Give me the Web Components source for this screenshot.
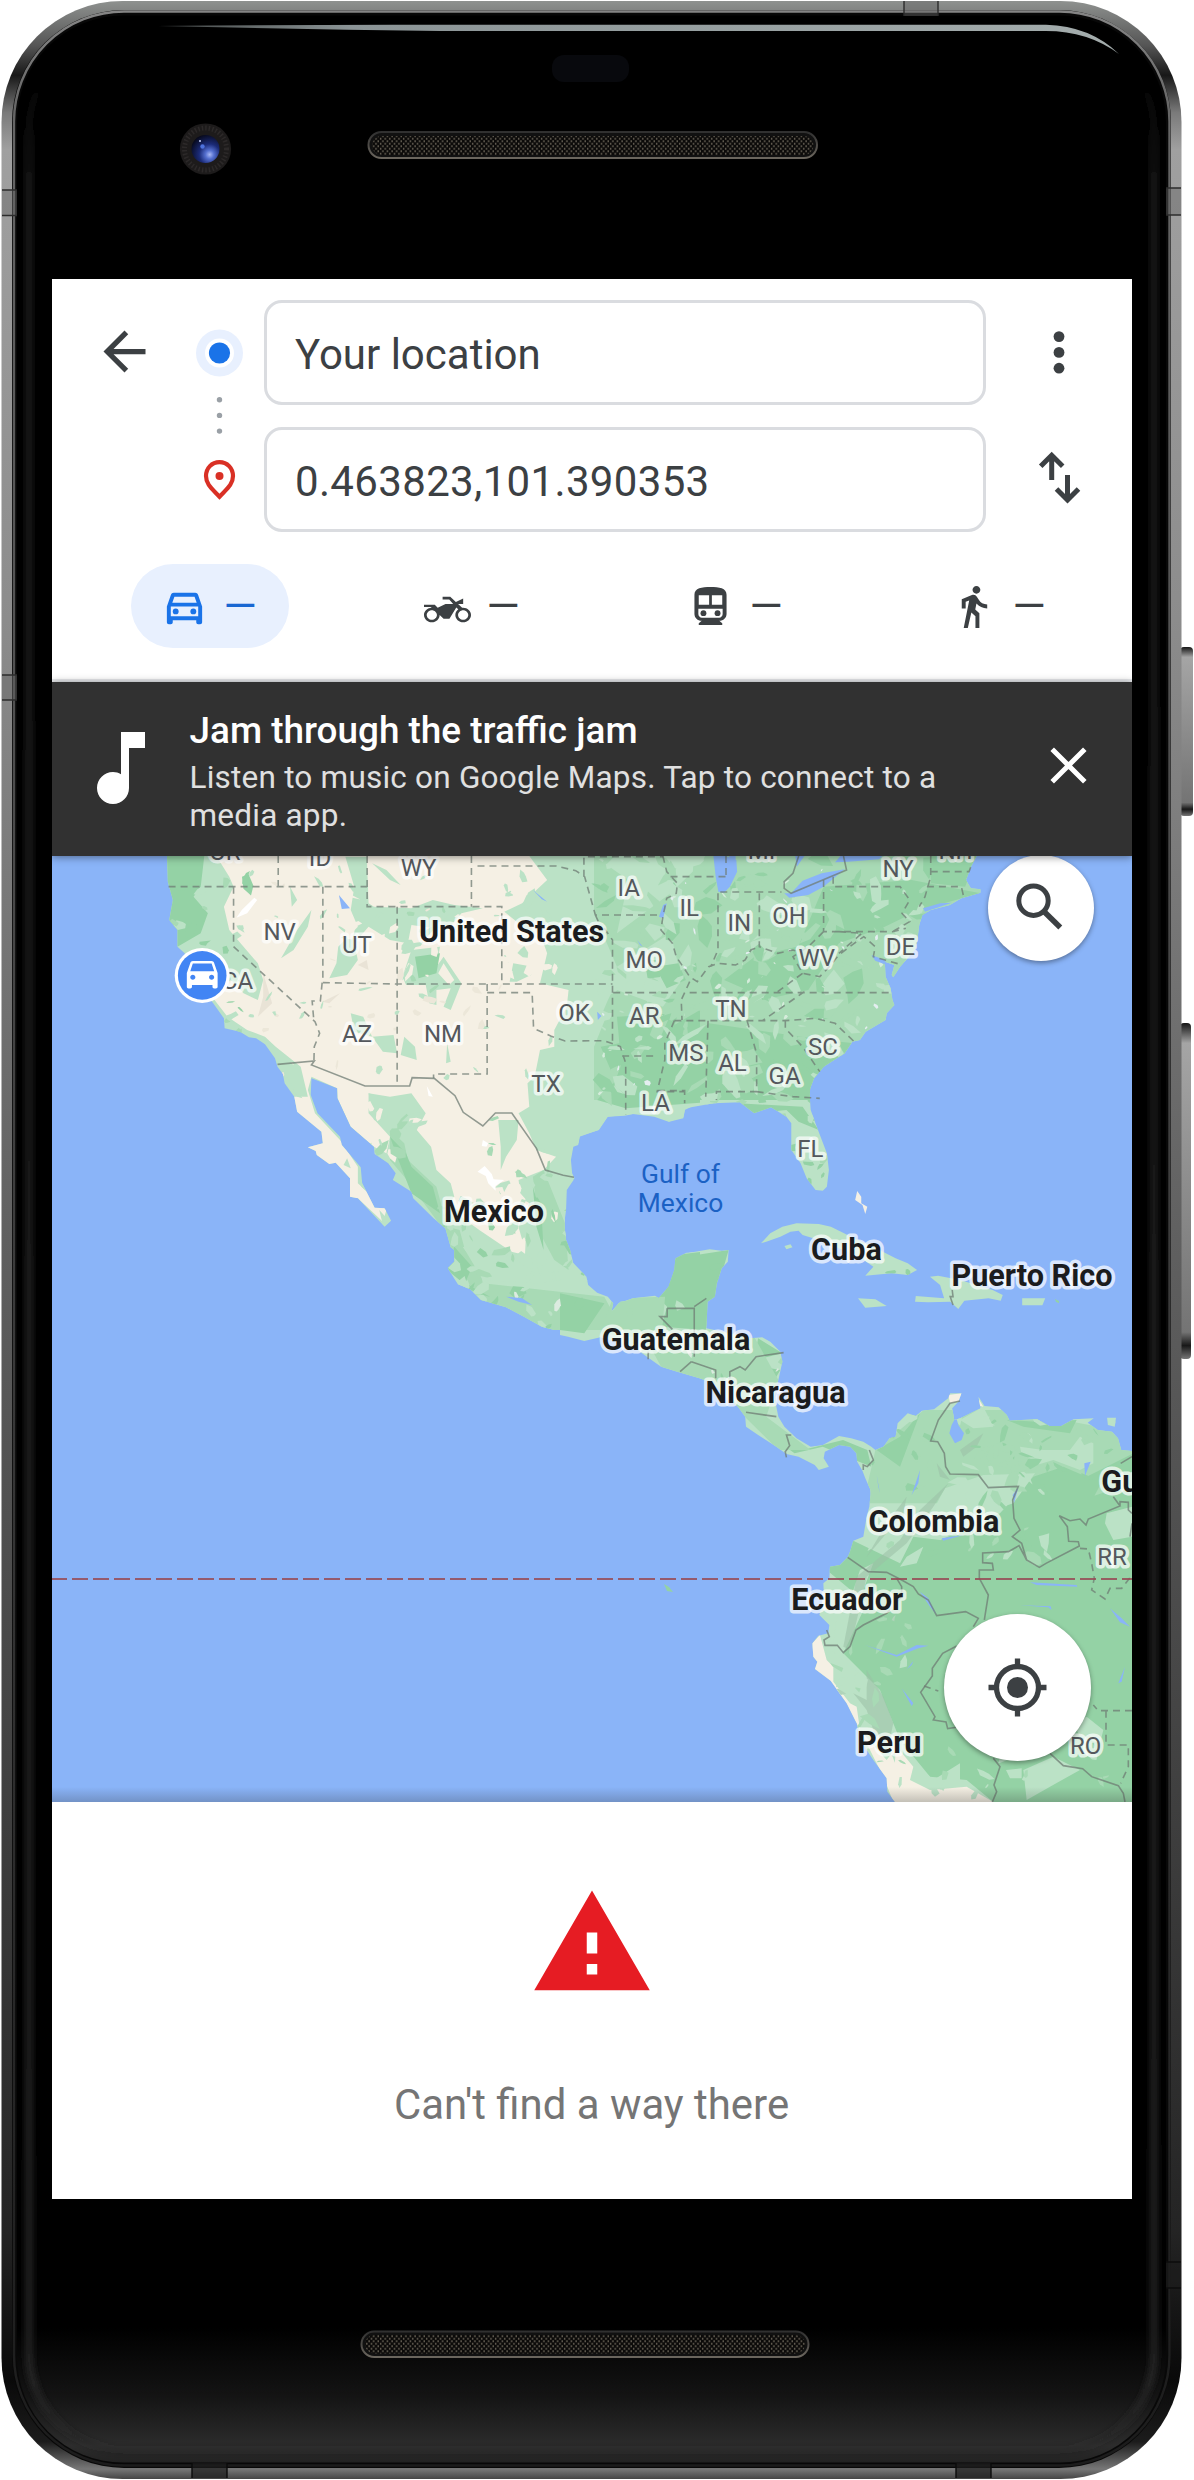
<!DOCTYPE html>
<html lang="en">
<head>
<meta charset="utf-8">
<title>Directions</title>
<style>
html,body{margin:0;background:#fff}
body{width:1194px;height:2480px;overflow:hidden;font-family:Roboto,"Liberation Sans",sans-serif}
</style>
</head>
<body>
<phone-frame>
  <directions-header>
    <route-field slot="from">Your location</route-field>
    <route-field slot="to" numeric>0.463823,101.390353</route-field>
    <travel-mode slot="modes" icon="car" selected>—</travel-mode>
    <travel-mode slot="modes" icon="moto">—</travel-mode>
    <travel-mode slot="modes" icon="transit">—</travel-mode>
    <travel-mode slot="modes" icon="walk">—</travel-mode>
  </directions-header>
  <media-banner>
    <span slot="title">Jam through the traffic jam</span>
    <span slot="text">Listen to music on Google Maps. Tap to connect to a media app.</span>
  </media-banner>
  <route-map></route-map>
  <route-error>Can't find a way there</route-error>
</phone-frame>
<script>
function define(name, html, setup) {
  const t = document.createElement('template');
  t.innerHTML = html;
  customElements.define(name, class extends HTMLElement {
    constructor() {
      super();
      this.attachShadow({ mode: 'open' }).appendChild(t.content.cloneNode(true));
    }
    connectedCallback() { if (setup) setup(this, this.shadowRoot); }
  });
}

define('phone-frame', `
<style>
:host{display:block;position:relative;width:1194px;height:2480px}
.shell{position:absolute;inset:0;display:block}
.pad{box-sizing:border-box;padding:279px 62px 281px 52px;height:2480px;position:relative}
.screen{display:flex;flex-direction:column;width:1080px;height:1920px;background:#fff;overflow:hidden}
</style>
<svg class="shell" width="1194" height="2480" viewBox="0 0 1194 2480">
<defs>
<linearGradient id="rim" x1="0" y1="0" x2="0" y2="1"><stop offset="0" stop-color="#8e918f"/><stop offset=".018" stop-color="#555"/><stop offset=".03" stop-color="#181818"/><stop offset=".045" stop-color="#7a7a7a"/><stop offset=".06" stop-color="#a0a0a0"/><stop offset=".25" stop-color="#8c8c8c"/><stop offset=".5" stop-color="#606060"/><stop offset=".75" stop-color="#3c3c3c"/><stop offset=".9" stop-color="#242424"/><stop offset=".96" stop-color="#090909"/><stop offset=".985" stop-color="#1c1c1c"/><stop offset=".996" stop-color="#777"/><stop offset="1" stop-color="#444"/></linearGradient>
<linearGradient id="rim2" x1="0" y1="0" x2="0" y2="1"><stop offset="0" stop-color="#858585"/><stop offset=".04" stop-color="#666"/><stop offset=".5" stop-color="#3c3c3c"/><stop offset="1" stop-color="#1c1c1c"/></linearGradient>
<linearGradient id="face" x1="0" y1="0" x2="0" y2="1"><stop offset="0" stop-color="#000"/><stop offset=".945" stop-color="#000"/><stop offset=".973" stop-color="#141414"/><stop offset=".993" stop-color="#2c2c2c"/><stop offset="1" stop-color="#222"/></linearGradient>
<linearGradient id="sheen" x1="0" y1="0" x2="0" y2="1"><stop offset="0" stop-color="#1a1a1a" stop-opacity="0"/><stop offset=".02" stop-color="#1a1a1a" stop-opacity=".1"/><stop offset=".06" stop-color="#1a1a1a"/><stop offset=".97" stop-color="#262626"/><stop offset="1" stop-color="#2c2c2c" stop-opacity=".2"/></linearGradient>
<filter id="soft" x="-5%" y="-5%" width="110%" height="110%"><feGaussianBlur stdDeviation="3"/></filter>
<linearGradient id="glint"><stop offset="0" stop-color="#9aa3a3" stop-opacity=".4"/><stop offset=".2" stop-color="#8b9496"/><stop offset="1" stop-color="#a4adad"/></linearGradient>
<linearGradient id="slot" x1="0" y1="0" x2="0" y2="1"><stop offset="0" stop-color="#303030"/><stop offset="1" stop-color="#6b665e"/></linearGradient>
<linearGradient id="key" x1="0" y1="0" x2="0" y2="1"><stop offset="0" stop-color="#151515"/><stop offset=".06" stop-color="#a5a5a5"/><stop offset=".92" stop-color="#747474"/><stop offset=".96" stop-color="#181818"/><stop offset="1" stop-color="#777"/></linearGradient>
<radialGradient id="lens" cx=".65" cy=".7" r=".75"><stop offset="0" stop-color="#a9b8f5"/><stop offset=".2" stop-color="#5570d0"/><stop offset=".5" stop-color="#1b2b78"/><stop offset="1" stop-color="#060818"/></radialGradient>
<pattern id="mesh" width="4.6" height="5" patternUnits="userSpaceOnUse"><rect width="4.6" height="5" fill="#0b0a09"/><path d="M1.1 .2v2M3.4 2.7v2" stroke="#645e53" stroke-width="1.4"/></pattern>
</defs>
<rect x="1180" y="647" width="13" height="169" rx="4" fill="url(#key)"/>
<rect x="1180" y="1023" width="11" height="336" rx="4" fill="url(#key)"/>
<rect x="1.5" y="1" width="1180" height="2478" rx="121" fill="url(#rim)"/>
<rect x="12" y="10" width="1159" height="2458" rx="112" fill="#080808"/>
<rect x="14" y="11.5" width="1155.500" height="2454" rx="110" fill="none" stroke="url(#rim2)" stroke-width="2.400"/>
<rect x="17" y="15.500" width="1149" height="2447" rx="106" fill="url(#face)"/>
<rect x="29" y="34" width="1125" height="2416" rx="96" fill="none" stroke="url(#sheen)" stroke-width="7" filter="url(#soft)"/>
<g fill="#666" fill-opacity=".45">
<path d="M2 190h15v25h-15zM2 675h15v25h-15zM1166 188h15v27h-15zM904 1v15h34v-15z"/>
<path d="M192 2463v15h35v-15zM956 2463v15h35v-15zM1166 2262h15v26h-15z" fill="#1c1c1c" fill-opacity=".7"/></g>
<path d="M2 190h15M2 215.500h15M2 675h15M2 700h15M1166 188h15M1166 215h15M904 1v15M938 1v15" stroke="#2c2c2c" stroke-width="1.400"/>
<path d="M192 2463v15M227 2463v15M956 2463v15M991 2463v15M1166 2262h15M1166 2288h15" stroke="#0c0c0c" stroke-width="1.400"/>
<path d="M158 26Q300 24.500 440 24.800H1046Q1090 26 1119 54Q1088 31 1046 31H440Q300 29 158 26z" fill="url(#glint)"/>
<rect x="552" y="55" width="77" height="27" rx="12" fill="#08090d"/>
<circle cx="205.500" cy="149" r="25.600" fill="#1d1b1b"/><circle cx="205.500" cy="149" r="21" fill="none" stroke="#2c2929" stroke-width="5" stroke-dasharray="1.500 2"/>
<circle cx="205.500" cy="149" r="14" fill="url(#lens)"/><circle cx="202.500" cy="146.500" r="2.200" fill="#4e72dc"/><circle cx="200" cy="141" r="1" fill="#c8d4ff"/>
<rect x="368.500" y="132" width="448.500" height="26" rx="13" fill="#111" stroke="url(#slot)" stroke-width="2"/><rect x="372" y="136" width="441.500" height="19" rx="9.500" fill="url(#mesh)"/>
<rect x="361.500" y="2331.500" width="447" height="25.500" rx="12.700" fill="#111" stroke="url(#slot)" stroke-width="2"/><rect x="365" y="2335" width="440" height="18.500" rx="9" fill="url(#mesh)"/>
</svg>
<div class="pad"><div class="screen"><slot></slot></div></div>`);

define('route-field', `
<style>
:host{display:flex;align-items:center;box-sizing:border-box;height:105px;border:3px solid #dadce0;border-radius:18px;padding:4px 0 0 28px;font-size:42px;color:#3c4043;white-space:nowrap}
:host([numeric]){letter-spacing:.34px}
</style><slot></slot>`);

const MODES = {
  car: '<path d="M18.92 6.01C18.72 5.42 18.16 5 17.5 5h-11c-.66 0-1.21.42-1.42 1.01L3 12v8c0 .55.45 1 1 1h1c.55 0 1-.45 1-1v-1h12v1c0 .55.45 1 1 1h1c.55 0 1-.45 1-1v-8l-2.080-5.990zM6.850 7h10.290l1.080 3.110H5.770L6.850 7zM19 17H5v-5h14v5z"/><circle cx="7.500" cy="14.500" r="1.500"/><circle cx="16.500" cy="14.500" r="1.500"/>',
  moto: '<path transform="translate(0 2.300) scale(1 .936)" d="M20 11c-.18 0-.36.03-.53.05L17.410 9H20V6l-3.720 1.860L13.410 5H9.500v1.600h3.390l2 2.400H11l-4 2-1.500-1.600H0v1.200h3.200L4 11c-2.210 0-4 1.790-4 4s1.790 4 4 4 4-1.790 4-4l2 2h3l3.490-6.100 1.010 1.010c-.91.73-1.500 1.840-1.500 3.090 0 2.210 1.790 4 4 4s4-1.790 4-4-1.790-4-4-4zM4 17.600c-1.400 0-2.600-1.200-2.600-2.600s1.200-2.600 2.600-2.600 2.600 1.200 2.600 2.600-1.200 2.600-2.600 2.600zm16 0c-1.400 0-2.600-1.200-2.600-2.600s1.200-2.600 2.600-2.600 2.600 1.200 2.600 2.600-1.200 2.600-2.600 2.600z"/>',
  transit: '<path fill-rule="evenodd" d="M12 2c-4.420 0-8.200.5-8.200 4v9.800C3.800 17.700 5.400 19.300 7.500 19.300L6 20.600v.9h12v-.9l-1.500-1.300c2.100 0 3.700-1.600 3.700-3.500V6c0-3.500-3.780-4-8.200-4zM6 6.200h5.300v4.900H6zM12.700 6.200H18v4.900h-5.300zM5.800 13.100h12.400v2.700c0 1-.8 1.900-1.800 1.900H7.600c-1 0-1.800-.9-1.800-1.900z"/><circle cx="8.400" cy="15.400" r="1.500"/><circle cx="15.600" cy="15.400" r="1.500"/>',
  walk: '<path d="M13.500 5.500c1.100 0 2-.9 2-2s-.9-2-2-2-2 .9-2 2 .9 2 2 2zM9.800 8.900L7 23h2.100l1.800-8 2.100 2v6h2v-7.500l-2.100-2 .6-3C14.800 12 16.800 13 19 13v-2c-1.900 0-3.500-1-4.300-2.400l-1-1.600c-.4-.6-1-1-1.700-1-.3 0-.5.1-.8.1L6 8.300V13h2V9.600l1.800-.7"/>'
};
define('travel-mode', `
<style>
:host{display:flex;align-items:center;box-sizing:border-box;width:158px;height:84px;padding-left:30px;gap:15.500px;border-radius:42px;color:#3c4043;font-size:42.500px}
:host([selected]){background:#e8f0fe;color:#1967d2}
:host([selected]) svg{fill:#1a73e8}
svg{width:47px;height:47px;fill:#3c4043;flex:none}
span{display:block;line-height:43px;padding-top:1px}
</style><svg viewBox="0 0 24 24"></svg><span><slot></slot></span>`,
(el, root) => { root.querySelector('svg').innerHTML = MODES[el.getAttribute('icon')]; });

define('directions-header', `
<style>
:host{display:block;box-sizing:border-box;height:403px;flex:none;border-bottom:3px solid #e8eaed;background:#fff}
.rows{display:flex;padding-top:21px}
.back{width:126px;height:105px;box-sizing:border-box;padding:20px 0 0 41px;flex:none}
.marks{width:86px;flex:none}
.fields{width:722px;display:flex;flex-direction:column;gap:22px}
.acts{flex:1}
svg{display:block}
.modes{display:flex;gap:105px;padding:32px 0 0 79px}
</style>
<div class="rows">
<div class="back"><svg width="63" height="63" viewBox="0 0 24 24" fill="#3c4043"><path d="M20 11H7.830l5.590-5.590L12 4l-8 8 8 8 1.410-1.410L7.830 13H20v-2z"/></svg></div>
<div class="marks"><svg width="86" height="232" viewBox="178 300 86 232"><circle cx="219.500" cy="353" r="23.500" fill="#e8f0fe"/><circle cx="219.500" cy="353" r="14.500" fill="#fff"/><circle cx="219.500" cy="353" r="10.600" fill="#1a73e8"/><g fill="#9aa0a6"><circle cx="219.500" cy="399.700" r="2.700"/><circle cx="219.500" cy="415.400" r="2.700"/><circle cx="219.500" cy="431.100" r="2.700"/></g><path d="M219.500 462.100c-7.700 0-13.500 6-13.500 14 0 8.500 6.300 12.900 13.500 20.600 7.200-7.700 13.500-12.100 13.500-20.600 0-8-5.800-14-13.500-14z" fill="none" stroke="#d93025" stroke-width="4.200"/><circle cx="219.500" cy="476" r="4" fill="#d93025"/></svg></div>
<div class="fields"><slot name="from"></slot><slot name="to"></slot></div>
<div class="acts"><svg width="146" height="232" viewBox="986 300 146 232"><g fill="#3c4043"><circle cx="1059" cy="336.600" r="5.400"/><circle cx="1059" cy="352.400" r="5.400"/><circle cx="1059" cy="368.200" r="5.400"/></g><g fill="none" stroke="#3c4043" stroke-width="5"><path d="M1051.700 480V456M1040.700 466.300L1051.700 455.300L1062.700 466.300M1067.500 475V499M1056.500 489L1067.500 500L1078.500 489"/></g></svg></div>
</div>
<div class="modes"><slot name="modes"></slot></div>`);

define('media-banner', `
<style>
:host{display:flex;flex:none;height:174px;background:#313131;color:#fff;position:relative;z-index:2;box-shadow:0 1px 8px rgba(0,0,0,.45)}
.note{width:96px;height:96px;margin:38px 0 0 20.500px;flex:none}
.copy{margin:27px 0 0 21px;width:775px}
.t{font-size:36.900px;line-height:43px;font-weight:500}
.b{font-size:31.500px;line-height:38px;color:#e0e0e0;margin-top:7px;letter-spacing:.22px}
.x{width:63px;height:63px;margin:52px 0 0 72.500px;flex:none}
</style>
<svg class="note" viewBox="0 0 24 24" fill="#fff"><path d="M12 3v10.550c-.59-.34-1.270-.55-2-.55-2.210 0-4 1.790-4 4s1.790 4 4 4 4-1.790 4-4V7h4V3h-6z"/></svg>
<div class="copy"><div class="t"><slot name="title"></slot></div><div class="b"><slot name="text"></slot></div></div>
<svg class="x" viewBox="0 0 63 63" stroke="#fff" stroke-width="5"><path d="M15.200 15.200L47.800 47.800M47.800 15.200L15.200 47.800"/></svg>`);

define('map-button', `
<style>
:host{display:flex;align-items:center;justify-content:center;position:absolute;border-radius:50%;background:#fff;box-shadow:0 2px 5px rgba(0,0,0,.38)}
</style><slot></slot>`);

const STATES = [['OR',225,860],['ID',320,865.7],['WY',418.6,876],['NV',279.6,939.5],['UT',357,953],['CA',237.5,989],['AZ',357,1042.3],['NM',443,1042.3],['OK',574,1021],['TX',546,1092],['IA',628.6,896],['MO',644.3,968.3],['AR',644.3,1023.7],['LA',655.4,1111.3],['IL',689.3,916.3],['IN',739.4,931.3],['OH',789,923.7],['WV',816.7,965.7],['NY',898,877],['NH',955.6,859],['MI',761.6,859],['DE',900.5,955],['TN',731,1017],['MS',685.8,1060.7],['AL',732.5,1070.7],['SC',823,1054.7],['GA',784.6,1084],['FL',810.3,1156.7],['RR',1112,1564.7],['RO',1085.7,1753.7]];
const COUNTRIES = [['United States',511.6,942.3],['Mexico',494,1222.3],['Cuba',846.4,1259.7],['Puerto Rico',1032,1285.7],['Guatemala',676,1349.7],['Nicaragua',775.5,1403],['Colombia',934,1532.3],['Ecuador',847.3,1610.3],['Peru',889.3,1753.3],['Gu',1120.3,1492]];

function shards(seed, box, count, size, colors) {
  let s = seed, out = '';
  const r = () => (s = (s * 16807) % 2147483647) / 2147483647;
  for (let i = 0; i < count; i++) {
    const cx = box[0] + r() * box[2], cy = box[1] + r() * box[3];
    const a = r() * 3.14, L = size * (.4 + r()), W = L * (.2 + r() * .5), n = 5 + Math.floor(r() * 3), p = [];
    for (let k = 0; k < n; k++) {
      const t = k / n * 6.283, q = .5 + r() * .7, u = Math.cos(t) * L * q, v = Math.sin(t) * W * q;
      p.push((cx + u * Math.cos(a) - v * Math.sin(a)).toFixed(1) + ',' + (cy + u * Math.sin(a) + v * Math.cos(a)).toFixed(1));
    }
    out += '<polygon points="' + p.join(' ') + '" fill="' + colors[Math.floor(r() * colors.length)] + '"/>';
  }
  return out;
}

const W = 'transform="translate(140 850) scale(.35714 .33333)"';
const E = 'transform="translate(594 680) scale(.38265 .33333)"';
const C = 'transform="translate(560 1050) scale(.40435 .33333)"';
const S = 'transform="translate(700 1370) scale(.33333)"';
const LAND = `
<path ${W} d="M75 0L78 95L92 150L82 210L105 240V290L125 310L160 400L205 460L235 505L237 535L280 545L305 562L325 565L350 583L378 625L385 650L400 672L405 700L432 740L440 785L508 845L512 880L470 892L492 903L495 915L530 942L548 938L588 985V1040L610 1045L685 1130L703 1112L685 1075L657 1073L622 1000L618 952L565 885L560 860L497 790L478 735L480 685L552 715L553 745L590 830L655 890L657 912L695 940L716 970L708 990L760 1025L765 1045L822 1105L855 1135L870 1192L880 1200V1235L862 1255L890 1303L925 1318L955 1350L1025 1372L1075 1400L1125 1430L1160 1440H1568V1206L1530 1208L1500 1225L1498 1255L1480 1310L1452 1345L1440 1340L1345 1355L1320 1385L1325 1360L1310 1340L1280 1328L1255 1305L1250 1280L1210 1235L1195 1190L1188 1120L1193 1080L1195 1020L1214 990L1207 960L1204 930L1212 888L1228 880L1232 858L1285 840L1310 800L1380 792L1440 800L1480 815L1522 800L1525 780L1568 758V0z"/>
<path ${E} d="M1000 500V528L985 560L972 600L985 625L1010 628V638L960 655L930 675L880 690L858 705L850 735L845 780L838 810L800 860L782 892L778 885L785 855L760 845L762 890L775 925L780 960L785 975L765 1000L762 1020L710 1055L695 1080L675 1085L655 1120L600 1160L575 1195L565 1225L562 1260H0V500z"/>
<path ${C} d="M705 0L690 15L640 60L620 100L617 130L620 180L635 230L660 310L665 360L660 410L650 422L632 420L610 385L595 340L572 300V220L560 200L522 172L480 190L445 157L380 160L310 175L305 205L270 215L245 200L190 190L160 197L117 200L95 240L48 260L45 285L33 290L27 330L30 370L36 385L15 410L12 500V560L25 600L35 650L60 690L68 715L90 735L120 745L130 760L125 788L145 760L180 745L235 737L245 745L270 710L283 660L285 630L320 608L370 598L400 602L417 600L415 635L400 655L388 700L383 740L365 755L362 835L420 850L470 865L500 862L520 875L545 905L550 935L540 990L530 1040L540 1100L555 1130L585 1165L620 1190L650 1185L690 1158L720 1165L750 1175L770 1190L780 1200L800 1190L815 1165L830 1160L835 1120L860 1090L880 1098L895 1082L925 1078L960 1045L965 1030H993L985 1055L970 1075L975 1110L990 1105L1040 1075L1035 1040L1050 1068L1085 1072L1105 1095L1112 1112L1180 1108L1210 1128H1240L1270 1108L1320 1105L1305 1118L1330 1140L1365 1145L1380 1165L1388 1200L1415 1203V1350H770L768 1320L755 1285L748 1262L735 1235L733 1210L718 1190L690 1185L655 1205L652 1225L665 1250L640 1260L630 1245L590 1220L560 1212L535 1190L490 1155L460 1130L458 1100L440 1070L400 1030L380 1000L345 985L290 965L250 950L215 920L180 890L100 862L60 873L20 860L0 855V0z"/>
<path ${S} d="M488 290L510 330L512 370L508 410L500 440L490 500L460 512L450 545L443 562L420 585L390 590L388 625L370 640L372 680L358 735L388 765L385 790L355 797L337 820L340 860L352 875L345 897L392 932L440 1000L470 1060L480 1110L520 1170L560 1225L562 1265L585 1296H1300V290z"/>
<path ${C} d="M497 580L520 550L550 530L585 520L640 522L670 530L720 560L790 600L830 625L860 640L883 660L860 675L820 670L755 677L775 650L745 625L700 600L640 570L600 555L590 542L570 545L545 560L510 575zM915 680L935 677L990 690L1070 720L1095 735L1090 752L1060 745L1000 752L985 777L965 755L910 757L878 755L880 738L950 745L940 705zM737 745L780 748L808 768L755 773zM1143 745H1200L1193 766H1143zM1353 1103H1375L1372 1130L1355 1125zM555 588L570 583L575 592L560 598z"/>`;

define('route-map', `
<style>
:host{display:block;position:relative;height:946px;flex:none;overflow:hidden;background:#8ab4f8}
.m{display:block}
.lines path{vector-effect:non-scaling-stroke;fill:none;stroke:#6f7c74;stroke-opacity:.75;stroke-width:1.600}
.lines .d{stroke-dasharray:7 5}
text{font-family:Roboto,"Liberation Sans",sans-serif;text-anchor:middle;paint-order:stroke;stroke:#fff;stroke-opacity:.7;stroke-width:7px;stroke-linejoin:round}
.st{font-size:24px;fill:#54585d}
.co{font-size:30.600px;font-weight:700;fill:#1b1c1e}
.sea{font-size:26.400px;fill:#1b61c4;stroke:none}
.fade{position:absolute;left:0;right:0;bottom:0;height:15px;background:linear-gradient(rgba(0,0,0,0),rgba(40,40,40,.24))}
.find{left:935.500px;top:-1.500px;width:106px;height:106px}
.here{left:891.500px;top:757.500px;width:147px;height:147px}
</style>
<svg class="m" width="1080" height="946" viewBox="52 856 1080 946">
<defs><clipPath id="land">${LAND}</clipPath></defs>
<g fill="#bbe2c6">${LAND}</g>
<g clip-path="url(#land)">
 <path ${E} fill="#a8dab5" d="M0 528L90 600L60 760L200 640L300 528H1010V900L900 1260H0V1100L60 930L180 980L230 900L200 760L60 860L0 700z"/>
 <path ${E} fill="#94d2a5" d="M600 620L830 600L1010 640L850 690L760 740L640 790L560 930L440 960L400 880L530 810zM60 1010L220 1000L180 1150L300 1030L600 1080L680 1090L560 1260H80zM420 830L530 800L500 900L420 940L340 900zM160 860L220 850L240 900L190 925zM880 528H1000L970 620L880 610z"/>
 <path ${W} fill="#94d2a5" d="M75 18L180 18L170 110L150 140L190 190L170 250L105 290L75 210zM1290 590L1440 560L1568 480V758L1360 775L1280 750L1330 690z"/>
 <path ${W} fill="#f5f0e4" d="M215 0V20L250 80L262 110L235 170L250 240L290 290L330 340L345 390L330 450L290 430L255 390L215 420L205 445L245 500L300 540L350 560L380 590L450 650L470 740L430 740L400 790L505 850V880L460 890L530 950L580 985L585 1045L610 1045L680 1115L690 1080L610 1000L610 950L560 870L490 790L470 720L480 680L552 715L553 745L590 830L655 890L690 910L700 860L640 790V730L700 740L760 730L800 790L775 840L815 890L830 960L870 1000L880 1040L860 1070L950 1140L1040 1205L1078 1215L1080 1170L1060 1130L1090 1060L1065 1030L1060 990L1130 960L1165 920L1110 900L1090 850L1060 790L1090 770L1085 700L1105 680L1120 600L1160 590V540L1195 470L1200 420L1120 400L1140 310L1130 280L1020 185L1070 160L1110 120L1140 90L1090 18V0z"/>
 <path ${W} fill="#bbe2c6" d="M575 20L635 20L640 160L655 170L760 175L820 150L880 165L960 175L900 190L860 240L760 225L750 280L700 270L640 230L600 280L610 330L580 375L530 385L550 340L555 290L610 230L590 180L600 110zM735 380L760 300L840 290L830 350L850 320L900 400L870 480L850 470L870 415L830 420V465L810 460L800 405L745 405zM650 560L710 555L720 610L680 605zM590 490L625 500L650 560L600 545zM740 560L770 590L775 630L730 615zM860 580L870 635L857 640zM1003 810L1060 810L1055 870L1025 920L1010 960L1010 890zM1045 340L1100 350L1095 375L1055 395L1035 395zM650 40L690 60L730 105L700 90zM640 730L700 750L690 820L655 810zM580 925L590 955L570 945zM410 680L455 745L440 740zM670 1080L700 1115L680 1125zM615 980L640 1030L620 1010zM420 110L440 150L425 170zM440 240L480 180L470 230L430 300L395 325z"/>
 <path ${W} fill="#f5f0e4" d="M850 340L880 390L865 405L835 370zM655 250L700 300L690 350L650 330z"/>
 <path ${W} fill="#a8dab5" d="M700 840L740 880L750 930L830 1010L860 1130L930 1150L960 1300L1130 1320L1300 1340L1350 1440H1100L950 1350L860 1250L830 1110L740 980L700 930zM1100 980L1130 960L1190 1120L1200 1260L1160 1230L1120 1150z"/>
 <path ${W} fill="#bbe2c6" d="M880 1080L940 1140L1040 1210L1100 1230L1180 1290L1110 1300L960 1290L910 1200z"/>
 <path ${W} fill="#94d2a5" d="M700 860L745 910L760 950L820 1010L840 1090L760 1030L720 920zM880 1190L930 1250L910 1300L980 1340L940 1330L860 1260zM1100 1010L1125 1100L1130 1200L1110 1130zM1568 1206L1500 1215L1470 1330L1568 1380zM770 320L840 310L830 370L780 385z"/>
 <path ${W} fill="#e9e3d6" d="M345 370L370 460L330 500L345 440zM510 455L560 430L530 460zM610 345L635 330L640 360z"/>
 <path ${C} fill="#94d2a5" d="M285 625L417 600L360 840L250 830L265 770L240 740zM490 865L550 910L480 930zM500 950L545 960L520 1010zM440 160L600 170L640 240L590 215L560 180L480 190zM0 730L110 760L60 850L0 840zM500 1140L600 1200L700 1170L760 1200L770 1250L650 1190L580 1210z"/>
 <path ${C} fill="#a8dab5" d="M130 745L260 740L250 870L100 850zM210 860H480L540 990L510 1100L620 1200H540L440 1080L250 950zM780 1200L900 1080L1110 1080L1420 1150V1360H750z"/>
 <path ${S} fill="#94d2a5" d="M730 590L700 520L900 430L1000 320L1090 290L1160 320L1300 250V1296H880L800 1230L690 1220L600 1110L540 960L430 850L500 700L380 600L460 512L600 580L640 500L720 510zM920 150L1010 155L1130 150L1110 190L970 170zM530 240L600 200L660 130L600 290z"/>
 <path ${S} fill="#bbe2c6" d="M960 230L1030 240L1110 240L1140 200L1180 220L1180 280L1140 300L1060 270L1010 285L965 255zM735 355L850 315L1005 310L940 400L850 430L700 420zM620 560L670 530L650 580L600 590zM780 150L850 110L880 170L820 175zM1220 430L1296 410V500L1240 510L1215 460zM970 1200L1060 1160L1140 1200L1050 1250L980 1290zM1120 1060L1160 1040L1210 1080L1200 1120L1140 1100zM918 1200L965 1195V1225L930 1225z"/>
 <path ${S} fill="#bbe2c6" d="M440 720L480 600L520 580L460 740L430 830L400 820L410 740zM370 820L440 880L500 930L560 1030L620 1150L700 1230L780 1180L780 1230L860 1296H600L500 1100L390 900z"/>
 <path ${S} fill="#f5f0e4" d="M337 820L360 795L380 870L400 890V935L450 1000L470 1010L480 1080L560 1170L590 1130L640 1190L630 1230L690 1260L800 1250L880 1296H580L550 1220L470 1060L330 900zM745 75L785 70L780 93L750 100zM832 80L850 110L832 105z"/>
 <path ${S} fill="#9bbfa6" fill-opacity=".55" d="M745 340L660 420L600 510L470 620L430 830L450 840L500 620L620 520L700 410zM620 380L560 460L500 560L610 430zM850 190L780 240L790 260L830 230zM500 900L550 980L580 1060L560 1150L530 1110L500 1020L460 970L500 990zM710 280L750 330L720 320z"/>
 <g id="tex"></g>
 <path ${W} fill="#fff" d="M320 143L328 150L300 190L270 203L285 180zM945 965L965 948L985 972L990 988L1020 990L995 1008L996 1022L975 1000L968 978zM960 870L975 880L970 890L957 888zM803 708L820 740L808 738z"/>
 <path ${W} fill="#8ab4f8" d="M557 135L588 175L565 177zM1100 120L1140 155L1125 148zM1465 165L1475 160L1465 205L1453 200zM1392 270L1408 290L1400 285zM1280 485L1292 498L1282 510zM1025 1340L1070 1345L1098 1365L1060 1355z"/>
 <path ${E} fill="#8ab4f8" d="M312 528H344L372 540L374 575L355 620L340 638L325 635L318 590zM348 520H370V560zM490 632L497 640L515 640L545 602L595 580L655 568L600 620L560 645L510 653zM630 547L650 520H760L745 538L665 545zM525 520H555L530 560zM725 825L760 840L765 855L735 842zM860 685L905 670L935 668L900 682L865 695z"/>
 <path ${S} fill="#8ab4f8" d="M768 140L775 165L792 190L785 210L765 220L748 190L755 165zM1153 280L1172 275L1155 318zM660 300L655 340L635 375zM530 315L540 370L535 350zM990 637L1130 645L1132 650L1010 645zM960 706L1052 709L1055 720L1045 712zM1230 715L1265 745L1290 770L1260 757zM1275 890L1265 935L1255 940zM660 665L685 685L710 735L690 710zM495 825L590 855L650 825L685 827L655 835L590 860zM605 955L640 1000L635 1008zM725 505L790 495L730 512zM938 375L955 352L942 400zM640 873L620 898L635 885z"/>
</g>
<path ${C} fill="#f5f0e4" d="M735 423L745 440V460L760 470L755 492L748 465L730 450z"/>
<path d="M664 1584l5 3 4 5-6-1zM1055 1299l4 2v2l-3-1z" fill="#94d2a5"/>
<g class="lines">
<path ${W} d="M385 643L488 633L480 645L630 708H755L762 683L824 685L882 737L905 787L960 828L995 789H1041L1110 895L1135 960L1185 976L1215 982"/>
<path class="d" ${W} d="M80 110H636M387 18V110M636 18V170H1013V402M262 110V290L490 515L503 550L488 590L487 633M512 110V398L720 402H1323M720 170V708M510 398L505 453H482L487 515M928 18V170M972 402V672H822V685M972 428H1098L1102 535L1150 558L1190 573L1300 572L1345 590L1360 640V795M1323 572V270L1300 235M945 48H1165L1220 62L1245 80L1275 195H1455M1275 195L1290 230M1243 80V20H1465M1325 428H1500M1350 618H1450M1450 722H1525V760"/>
<path class="d" ${E} d="M180 528L190 575L218 610L215 640L190 655L180 710L175 750L205 790L215 830L250 890L270 905L300 860L325 850L370 855L395 840L410 810L432 800M200 590H345M345 528V600M324 640V810L305 860M330 636H490M432 640V800L480 820L520 810L545 820M600 600V755H780L815 745M600 755L560 800L520 830L545 880L590 890L615 860L640 825L680 790L705 770L735 800L730 830L800 853M545 880L480 935M250 938H780M250 905L228 960L230 1020M210 1022H500L580 1015L630 1030L680 1085M500 1022V1045L545 1100L590 1175M298 1022L292 1250M400 1022L425 1120V1235H320V1260M210 1022L185 1090V1140L165 1235H235M625 590V620H800L825 660L805 700L825 725L780 755M880 528V590L865 650L850 680M870 620H960L965 645M880 575H980L985 560M550 935L500 975L440 1022M425 1235L520 1250L590 1255M640 755L700 760L640 820"/>
<path ${E} d="M535 528L520 580L497 605V625L515 640L660 570L652 528"/>
<path ${C} d="M265 775H332V920M332 770L362 745M265 775V800H247L278 838M218 905V928M325 935L297 965M325 935L385 960V985M420 985V965L445 950L458 960L485 920L553 908M460 1087L535 1100M572 1155H560L568 1187L557 1205L560 1222M765 1200L775 1230L760 1250L750 1245V1260M970 720L972 740H965L972 765"/>
<path ${S} d="M780 93L750 100L715 150L692 213L713 215L733 250L737 290L750 312L835 314L865 353L955 349L938 390L942 445L960 480L937 500L965 520L980 570L1018 592L1038 580L1138 528L1135 515L1106 514L1102 470L1078 437L1110 452L1140 447L1158 465L1165 447L1260 408L1240 380M1260 408V395L1285 397V420L1296 430M1296 260L1262 280M1296 460L1290 500M980 570L957 527L925 545L848 549V578L877 580L880 600H838V625L865 675L853 750M443 562L505 605L560 607L605 630L640 650L655 672L685 690L710 737L797 725L835 745L820 770M590 625L605 650V680L560 730L490 765L468 780L450 830L430 848L412 826H375L372 810L388 800L380 780M770 828L728 850L697 895V918L662 967L705 1040L700 1050L738 1056L743 1076L770 1072M880 1165L900 1190L882 1245L890 1265L877 1296M1050 1150L1090 1187L1148 1196L1175 1220L1255 1247L1270 1270L1275 1296"/>
<path class="d" ${S} d="M1140 535L1165 537L1175 580L1183 625L1175 660L1215 687L1230 655L1265 655L1296 615M1296 1022H1195L1180 1005M1218 1022V1125H1285V1190L1262 1240M672 948L715 963"/>
</g>
<path d="M51 1579H1132" stroke="#964a55" stroke-width="1.800" stroke-opacity=".85" stroke-dasharray="16 5"/>
<g id="labels"></g>
<text class="sea" x="680.500" y="1182.700">Gulf of</text><text class="sea" x="680.500" y="1212.300">Mexico</text>
<circle cx="202.200" cy="975.400" r="27.500" fill="#fff"/><circle cx="202.200" cy="975.400" r="24.300" fill="#4285f4"/>
<g transform="translate(181.700 952.500) scale(1.710)"><path fill="#fff" d="M18.920 6.010C18.720 5.420 18.160 5 17.500 5h-11c-.66 0-1.210.42-1.420 1.010L3 12v8c0 .55.45 1 1 1h1c.55 0 1-.45 1-1v-1h12v1c0 .55.45 1 1 1h1c.55 0 1-.45 1-1v-8l-2.080-5.990zM6.500 16c-.83 0-1.500-.67-1.500-1.500S5.670 13 6.500 13s1.500.67 1.500 1.500S7.330 16 6.500 16zm11 0c-.83 0-1.500-.67-1.500-1.500s.67-1.500 1.500-1.500 1.500.67 1.500 1.500-.67 1.500-1.500 1.500zM5 11l1.500-4.500h11L19 11H5z"/></g>
</svg>
<div class="fade"></div>
<map-button class="find"><svg width="63" height="63" viewBox="1009.500 876 63 63" fill="none" stroke="#3c4043"><circle cx="1034" cy="900.700" r="14.700" stroke-width="5"/><path d="M1044.500 911.500L1060.800 927.600" stroke-width="5.600"/></svg></map-button>
<map-button class="here"><svg width="63" height="63" viewBox="-31.500 -31.500 63 63" fill="none" stroke="#3c4043" stroke-width="5.300"><circle r="21"/><circle r="10.500" fill="#3c4043" stroke="none"/><path d="M0-29V-21M0 29V21M-29 0H-21M29 0H21"/></svg></map-button>`,
(el, root) => {
  const L = '#bbe2c6', M = '#a8dab5', D = '#94d2a5', B = '#f5f0e4';
  root.getElementById('tex').innerHTML =
    shards(77, [600, 856, 330, 250], 230, 13, [L, M, M, D, L]) +
    shards(91, [600, 870, 320, 230], 70, 3, ['#d5ecdb', '#e4eef0', L]) +
    shards(13, [165, 870, 90, 170], 40, 8, [L, M, D]) +
    shards(29, [240, 860, 320, 220], 60, 6, [L, L, '#ece7d9']) +
    shards(31, [340, 860, 60, 130], 16, 7, [L, B]) +
    shards(43, [400, 905, 60, 90], 18, 8, [L, M, B]) +
    shards(53, [500, 890, 70, 130], 18, 9, [L, B]) +
    shards(59, [370, 1100, 60, 60], 14, 8, [L, B, M]) +
    shards(71, [490, 1110, 70, 120], 22, 7, [L, B, M]) +
    shards(57, [440, 1200, 150, 140], 70, 9, [L, M, D, L, L]) +
    shards(61, [500, 1260, 290, 200], 50, 6, [L, M, D, '#dcebe0']) +
    shards(83, [870, 1410, 180, 150], 60, 8, [L, M, D]) +
    shards(37, [960, 1420, 170, 70], 26, 9, [L, M, D]) +
    shards(45, [830, 1600, 80, 190], 30, 8, [L, M, '#b0d4ba']) +
    shards(51, [900, 1740, 230, 60], 18, 9, [L, M]) +
    shards(67, [760, 1220, 160, 60], 14, 6, [L, D, M]) +
    shards(21, [770, 1110, 60, 80], 14, 6, [L, M, D]);
  root.getElementById('labels').innerHTML =
    STATES.map(l => `<text class="st" x="${l[1]}" y="${l[2]}">${l[0]}</text>`).join('') +
    COUNTRIES.map(l => `<text class="co" x="${l[1]}" y="${l[2]}">${l[0]}</text>`).join('');
});

define('route-error', `
<style>
:host{display:flex;flex-direction:column;align-items:center;flex:1;background:#fff;color:#757575;font-size:41.900px;line-height:49px}
svg{display:block;width:126px;height:126px;margin:78px 0 74px}
div{margin-right:1px}
</style>
<svg viewBox="0 0 24 24" fill="#e61c23"><path d="M1 21h22L12 2 1 21zm12-3h-2v-2h2v2zm0-4h-2v-4h2v4z"/></svg><div><slot></slot></div>`);
</script>
</body>
</html>
